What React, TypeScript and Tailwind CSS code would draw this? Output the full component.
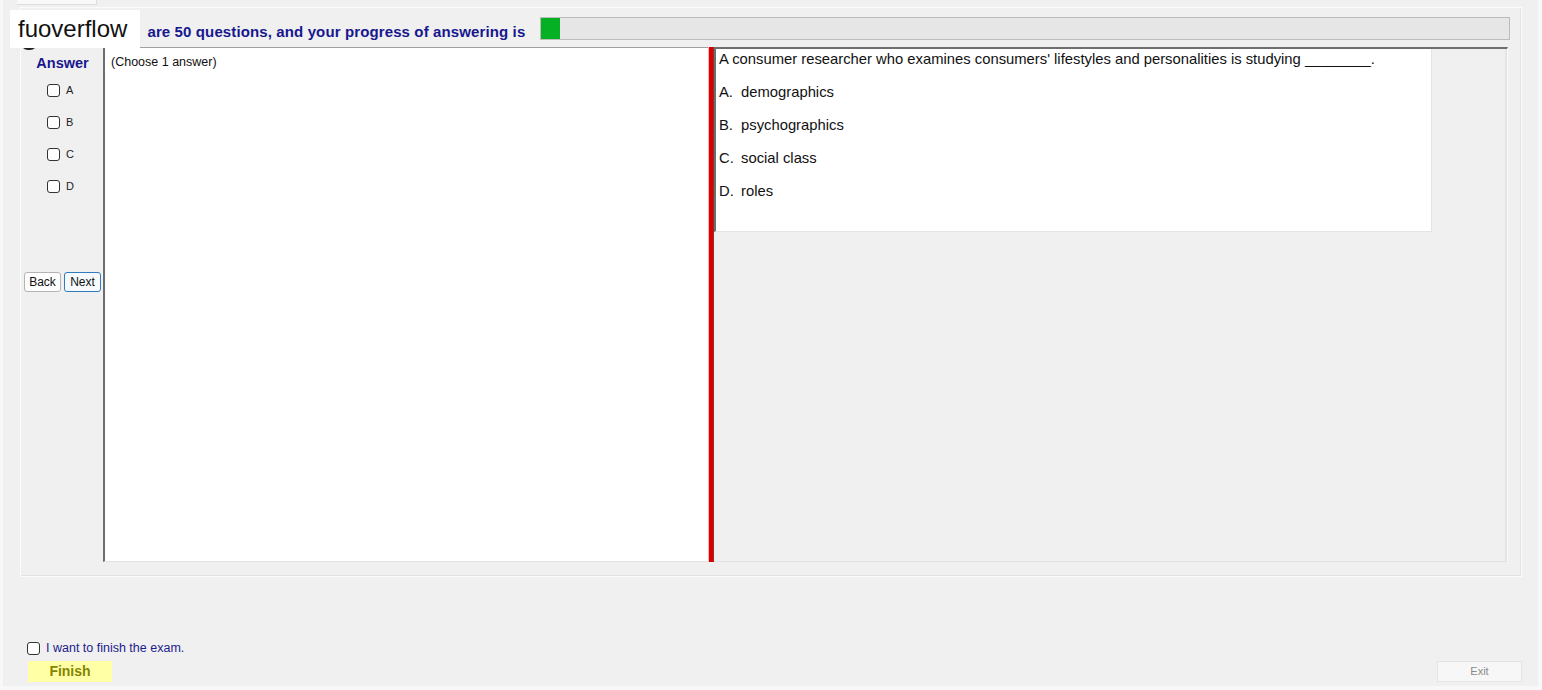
import React from "react";

const options = [
  { key: "A.", text: "demographics" },
  { key: "B.", text: "psychographics" },
  { key: "C.", text: "social class" },
  { key: "D.", text: "roles" },
];

function Box() {
  return <div className="w-[13px] h-[13px] rounded-[3px] border border-[#333] bg-white" />;
}

export default function App() {
  return (
    <div className="w-[1542px] h-[690px] bg-[#f8f8f8] relative overflow-hidden font-['Liberation_Sans',Arial,sans-serif]">
      <div className="ml-[3px] w-[1535px] h-[686px] bg-[#f0f0f0] flex flex-col">
        {/* tab strip */}
        <div className="h-[7px] flex">
          <div className="ml-[14px] w-[80px] h-[5px] bg-[#f9f9f9] border-r border-b border-[#dedede]" />
        </div>

        {/* group panel */}
        <div className="ml-[17px] w-[1502px] h-[570px] border border-[#fbfbfb] shadow-[inset_-1px_-1px_0_#e2e2e2] flex flex-col">
          <div className="h-[39px] flex items-start">
            <div className="ml-[76px] w-[443px] mt-[16px] leading-[16px] text-[15px] font-bold text-[#17178f] whitespace-nowrap flex gap-[9px] tracking-[0.12px]">
              <span>There</span>
              <span>are 50 questions, and your progress of answering is</span>
            </div>
            <div className="mt-[9px] w-[970px] h-[23px] border border-[#bcbcbc] bg-[#e6e6e6] flex">
              <div className="w-[19px] h-full bg-[#06b025]" />
            </div>
          </div>

          <div className="ml-[1px] w-[1486px] h-[515px] flex">
            {/* answer column */}
            <div className="w-[81px] flex flex-col">
              <div className="pt-[8px] leading-[16px] text-[14.5px] font-bold text-[#17178f] text-center">Answer</div>
              <div className="mt-[3px] flex flex-col">
                {["A", "B", "C", "D"].map((l) => (
                  <div key={l} className="h-[32px] pl-[25px] flex items-center gap-[6px]">
                    <Box />
                    <span className="text-[11px] text-[#222]">{l}</span>
                  </div>
                ))}
              </div>
              <div className="mt-[70px] flex gap-[3px] pl-[2px]">
                <button className="w-[37px] h-[20px] rounded-[3px] border border-[#b4b4b4] bg-[#fdfdfd] text-[12px] text-[#111] leading-[18px]">Back</button>
                <button className="w-[37px] h-[20px] rounded-[3px] border border-[#2e7bbf] bg-[#f6fafd] text-[12px] text-[#111] leading-[18px]">Next</button>
              </div>
            </div>

            {/* left white panel */}
            <div className="w-[605px] h-full bg-white border-l-2 border-l-[#6d6d6d] border-t border-t-[#a0a0a0] border-b border-b-[#e2e2e2] px-[6px] pt-[7px]">
              <div className="text-[12.5px] leading-[14px] text-[#111]">(Choose 1 answer)</div>
            </div>

            {/* splitter */}
            <div className="w-[6px] h-full bg-[#dc0000] border-l border-[#f2b8b8] border-r border-r-[#8a3030]" />

            {/* right panel */}
            <div className="flex-1 h-full border-t-2 border-[#6e6e6e] border-r border-r-[#fafafa] border-b border-b-[#e2e2e2] shadow-[inset_-2px_0_0_#e4e4e4]">
              <div className="w-[718px] h-[183px] bg-white border-l-2 border-[#6e6e6e] border-r border-r-[#e4e4e4] border-b border-b-[#e4e4e4] pl-[3px] pt-[2px]">
                <div className="text-[14.8px] leading-[16px] text-[#111] whitespace-nowrap">
                  A consumer researcher who examines consumers' lifestyles and personalities is studying ________.
                </div>
                <div className="mt-[1px]">
                  {options.map((o) => (
                    <div key={o.key} className="mt-[17px] text-[14.8px] leading-[16px] text-[#111] flex">
                      <span className="w-[22px]">{o.key}</span>
                      <span>{o.text}</span>
                    </div>
                  ))}
                </div>
              </div>
            </div>
          </div>
        </div>

        {/* footer */}
        <div className="pl-[24px] pr-[16px] pt-[65px]">
          <div className="flex items-center gap-[6px] h-[13px]">
            <Box />
            <span className="text-[12.5px] text-[#1c1c8c]">I want to finish the exam.</span>
          </div>
          <div className="mt-[6px] flex justify-between">
            <div className="ml-[1px] w-[84px] h-[21px] bg-[#ffffa6] flex items-center justify-center text-[14px] font-bold text-[#858500]">
              Finish
            </div>
            <div className="w-[85px] h-[21px] bg-[#f7f7f7] border border-[#e4e4e4] flex items-center justify-center text-[11px] text-[#8a8a8a]">
              Exit
            </div>
          </div>
        </div>
      </div>

      {/* watermark */}
      <div className="absolute left-[21px] top-[36px] w-[16px] h-[14px] rounded-full bg-[#222]" />
      <div className="absolute left-[10px] top-[10px] w-[130px] h-[38px] bg-white flex items-center pl-[8px] text-[24px] text-[#111]">
        fuoverflow
      </div>
    </div>
  );
}
